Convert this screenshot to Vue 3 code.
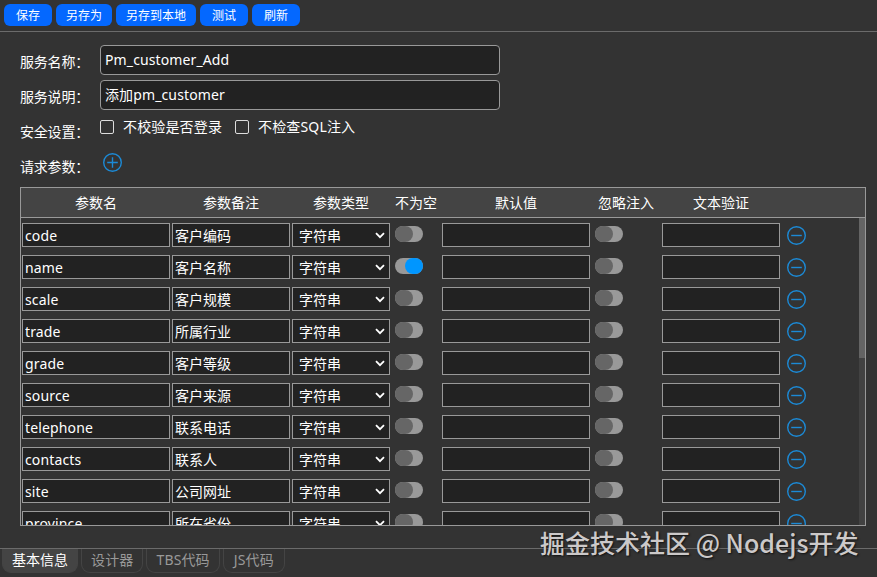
<script setup>
import { ref } from 'vue'

const actions = ['保存', '另存为', '另存到本地', '测试', '刷新']
const columns = ['参数名', '参数备注', '参数类型', '不为空', '默认值', '忽略注入', '文本验证']
const tabs = ['基本信息', '设计器', 'TBS代码', 'JS代码']

const activeTab = ref('基本信息')
const serviceName = ref('Pm_customer_Add')
const serviceDesc = ref('添加pm_customer')
const skipLogin = ref(false)
const skipSql = ref(false)

const params = ref([
  ['code', '客户编码'],
  ['name', '客户名称'],
  ['scale', '客户规模'],
  ['trade', '所属行业'],
  ['grade', '客户等级'],
  ['source', '客户来源'],
  ['telephone', '联系电话'],
  ['contacts', '联系人'],
  ['site', '公司网址'],
  ['province', '所在省份'],
].map(([name, remark]) => newParam(name, remark, name === 'name')))

function newParam(name = '', remark = '', required = false) {
  return { name, remark, type: '字符串', required, value: '', ignore: false, rule: '' }
}

function removeParam(index) {
  params.value.splice(index, 1)
}
</script>

<template>
  <div class="editor">
    <header class="toolbar">
      <button v-for="action in actions" :key="action" type="button">{{ action }}</button>
    </header>

    <main class="content">
      <div class="form-row">
        <label class="label">服务名称：</label>
        <input v-model="serviceName" class="text-field" type="text" spellcheck="false" />
      </div>
      <div class="form-row">
        <label class="label">服务说明：</label>
        <input v-model="serviceDesc" class="text-field" type="text" spellcheck="false" />
      </div>
      <div class="form-row">
        <span class="label">安全设置：</span>
        <div class="checks">
          <label class="check"><input v-model="skipLogin" type="checkbox" /><span>不校验是否登录</span></label>
          <label class="check"><input v-model="skipSql" type="checkbox" /><span>不检查SQL注入</span></label>
        </div>
      </div>
      <div class="form-row">
        <span class="label">请求参数：</span>
        <button type="button" class="icon-btn add" aria-label="添加" @click="params.push(newParam())">
          <svg viewBox="0 0 19 19" width="19" height="19"><circle cx="9.5" cy="9.5" r="8.8" /><path d="M4.2 9.5h10.6M9.5 4.2v10.6" /></svg>
        </button>
      </div>

      <section class="param-table">
        <div class="grid table-head">
          <span v-for="column in columns" :key="column">{{ column }}</span>
        </div>
        <div class="table-body">
          <div class="rows">
            <div v-for="(item, index) in params" :key="index" class="grid row">
              <input v-model="item.name" class="cell name" type="text" spellcheck="false" />
              <input v-model="item.remark" class="cell" type="text" />
              <div class="cell select">
                <span>{{ item.type }}</span>
                <svg viewBox="0 0 10 7" width="10" height="7"><path d="M1 1.2l4 4 4-4" /></svg>
              </div>
              <button type="button" :class="['switch', { on: item.required }]" aria-label="不为空" @click="item.required = !item.required"><i></i></button>
              <input v-model="item.value" class="cell" type="text" />
              <button type="button" :class="['switch', { on: item.ignore }]" aria-label="忽略注入" @click="item.ignore = !item.ignore"><i></i></button>
              <input v-model="item.rule" class="cell" type="text" />
              <button type="button" class="icon-btn remove" aria-label="删除" @click="removeParam(index)">
                <svg viewBox="0 0 19 19" width="19" height="19"><circle cx="9.5" cy="9.5" r="8.8" /><path d="M4.2 9.5h10.6" /></svg>
              </button>
            </div>
          </div>
          <div class="scrollbar"><div class="thumb"></div></div>
        </div>
      </section>
    </main>

    <footer class="tabs">
      <button v-for="tab in tabs" :key="tab" type="button" :class="{ active: activeTab === tab }" @click="activeTab = tab">{{ tab }}</button>
    </footer>

    <div class="watermark">掘金技术社区 @ Nodejs开发</div>
  </div>
</template>

<style>
body { background: #333; overflow: hidden; }
</style>

<style scoped>
.editor {
  position: relative;
  display: flex;
  flex-direction: column;
  height: 577px;
  background: #333;
  color: #fff;
  font: 14px/20px "Noto Sans", "Noto Sans CJK SC", sans-serif;
  overflow: hidden;
}

.editor *, .editor { box-sizing: border-box; }

button, input { font: inherit; color: inherit; margin: 0; }
button { border: 0; padding: 0; background: none; cursor: pointer; }
input { outline: none; }

.toolbar {
  display: flex;
  gap: 4px;
  height: 32px;
  padding: 4px;
  border-bottom: 1px solid #6b6b6b;
  flex: none;
}

.toolbar button {
  min-width: 48px;
  height: 22px;
  padding: 1px 10px 0;
  border-radius: 6px;
  background: #0468ff;
  font-size: 12px;
  line-height: 21px;
  white-space: nowrap;
}

.content {
  flex: 1;
  min-height: 0;
  padding: 13px 11px 0 20px;
}

.form-row {
  display: flex;
  align-items: flex-start;
  height: 35px;
}

.label {
  width: 80px;
  padding-top: 7px;
  letter-spacing: -0.2px;
  white-space: nowrap;
  flex: none;
}

.text-field {
  width: 400px;
  height: 30px;
  padding: 0 4px 2px;
  border: 1px solid #999;
  border-radius: 4px;
  background: #222;
  letter-spacing: 0.12px;
}

.checks { display: flex; padding-top: 2px; }

.check {
  display: flex;
  align-items: center;
  margin-right: 13px;
  letter-spacing: 0.15px;
}

.check input {
  appearance: none;
  width: 14px;
  height: 14px;
  margin-right: 9px;
  border: 1px solid #ddd;
  border-radius: 2px;
}

.check input:checked { background: #0096ff; }

.icon-btn { width: 19px; height: 19px; }

.icon-btn svg {
  display: block;
  fill: none;
  stroke: #1c8ad6;
  stroke-width: 1.4;
}

.add { margin: 3px 0 0 3px; }

.param-table {
  display: flex;
  flex-direction: column;
  height: 339px;
  margin-top: 2px;
  border: 1px solid #999;
}

.grid {
  display: grid;
  grid-template-columns: 150px 120px 100px 50px 150px 70px 120px 40px;
}

.table-head {
  height: 30px;
  background: #444;
  border-bottom: 1px solid #999;
  line-height: 30px;
  text-align: center;
  flex: none;
}

.table-body {
  display: flex;
  flex: 1;
  min-height: 0;
  overflow: hidden;
}

.rows { flex: 1; padding-top: 1px; overflow: hidden; }

.row { height: 32px; padding-top: 4px; align-items: start; }

.cell {
  height: 24px;
  min-width: 0;
  margin: 0 1px;
  padding: 0 2px;
  border: 1px solid #999;
  background: #222;
}

.name { letter-spacing: 0.15px; }

.select {
  display: flex;
  align-items: center;
  justify-content: space-between;
  padding: 2px 4px 0 6px;
}

.select svg { fill: none; stroke: #fff; stroke-width: 1.8; margin-bottom: 2px; }

.switch {
  display: flex;
  width: 28px;
  height: 16px;
  margin: 3px 0 0 4px;
  border-radius: 8px;
  background: #999;
}

.switch i { width: 18px; height: 16px; border-radius: 8px; background: #666; }
.switch.on { justify-content: flex-end; }
.switch.on i { background: #0096ff; }

.remove { margin: 3px 0 0 6px; }

.scrollbar { width: 6px; background: #424242; }
.thumb { height: 140px; background: #646464; }

.tabs {
  display: flex;
  gap: 3px;
  height: 29px;
  padding: 0 2px;
  border-top: 1px solid #6b6b6b;
  flex: none;
}

.tabs button {
  height: 24px;
  padding: 0 9px 2px;
  border: 1px solid #444;
  border-top: 0;
  border-radius: 0 0 9px 9px;
  color: #999;
  line-height: 21px;
  white-space: nowrap;
}

.tabs button:not(.active) { letter-spacing: 0.15px; }
.tabs button:last-child { padding: 0 10px 2px; }
.tabs button.active { background: #444; color: #fff; }

.watermark {
  position: absolute;
  left: 540px;
  top: 524px;
  color: #ccc9c9;
  font: 500 25px/36px "Noto Sans CJK SC", sans-serif;
  text-shadow: 1px 1px 2px #111;
  white-space: nowrap;
  pointer-events: none;
}
</style>
